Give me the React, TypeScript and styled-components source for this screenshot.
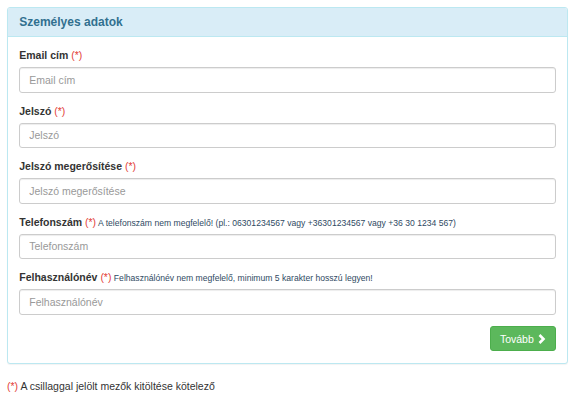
import React from "react";
import styled, { createGlobalStyle } from "styled-components";

const Global = createGlobalStyle`
  html, body { margin: 0; padding: 0; background: #fff; }
  body {
    font-family: "Liberation Sans", Arial, Helvetica, sans-serif;
    font-size: 10.5px;
    line-height: 1.42857;
    color: #333;
  }
  * { box-sizing: border-box; }
`;

const Page = styled.div`
  padding: 7px 10px 7px 7px;
`;

const Panel = styled.div`
  border: 1px solid #bce8f1;
  border-radius: 3px;
  background: #fff;
  margin-bottom: 15px;
  box-shadow: 0 1px 1px rgba(0, 0, 0, 0.05);
`;

const PanelHeading = styled.div`
  background: #d9edf7;
  border-bottom: 1px solid #bce8f1;
  border-radius: 2px 2px 0 0;
  padding: 7.5px 11.25px;
`;

const PanelTitle = styled.h3`
  margin: 0;
  font-size: 12px;
  line-height: 1.1;
  font-weight: bold;
  color: #31708f;
`;

const PanelBody = styled.div`
  padding: 11.25px;
  display: flex;
  flex-direction: column;
`;

const FormGroup = styled.div`
  margin-bottom: 11.25px;
`;

const Label = styled.label`
  display: block;
  font-weight: bold;
  margin-bottom: 3.75px;
  white-space: nowrap;
`;

const Req = styled.span`
  color: #e3413a;
  font-weight: normal;
`;

const Help = styled.span`
  font-weight: normal;
  font-size: 8.6px;
  color: #2f4a63;
`;

const Input = styled.input`
  display: block;
  width: 100%;
  height: 25.5px;
  padding: 4.5px 9px;
  font-family: inherit;
  font-size: 10.5px;
  color: #555;
  background: #fff;
  border: 1px solid #ccc;
  border-radius: 3px;
  box-shadow: inset 0 1px 1px rgba(0, 0, 0, 0.075);
  outline: none;
  &::placeholder { color: #999; }
`;

const Actions = styled.div`
  display: flex;
  justify-content: flex-end;
`;

const Button = styled.button`
  display: inline-flex;
  align-items: center;
  gap: 4px;
  height: 25.5px;
  padding: 4.5px 9px;
  font-family: inherit;
  font-size: 10.5px;
  color: #fff;
  background: #5cb85c;
  border: 1px solid #4cae4c;
  border-radius: 3px;
  cursor: pointer;
`;

const Footer = styled.p`
  margin: 0;
`;

type Field = { label: string; placeholder: string; help?: string; type?: string };

const fields: Field[] = [
  { label: "Email cím", placeholder: "Email cím", type: "email" },
  { label: "Jelszó", placeholder: "Jelszó", type: "password" },
  { label: "Jelszó megerősítése", placeholder: "Jelszó megerősítése", type: "password" },
  {
    label: "Telefonszám",
    placeholder: "Telefonszám",
    help: "A telefonszám nem megfelelő! (pl.: 06301234567 vagy +36301234567 vagy +36 30 1234 567)",
  },
  {
    label: "Felhasználónév",
    placeholder: "Felhasználónév",
    help: "Felhasználónév nem megfelelő, minimum 5 karakter hosszú legyen!",
  },
];

const Chevron = () => (
  <svg width="8" height="10" viewBox="0 0 8 10" aria-hidden="true">
    <path d="M1.5 1 L5.5 5 L1.5 9" fill="none" stroke="#fff" strokeWidth="2.6" strokeLinejoin="miter" />
  </svg>
);

export default function App() {
  return (
    <Page>
      <Global />
      <Panel>
        <PanelHeading>
          <PanelTitle>Személyes adatok</PanelTitle>
        </PanelHeading>
        <PanelBody>
          {fields.map((f) => (
            <FormGroup key={f.label}>
              <Label>
                {f.label} <Req>(*)</Req>
                {f.help && <Help> {f.help}</Help>}
              </Label>
              <Input type={f.type || "text"} placeholder={f.placeholder} />
            </FormGroup>
          ))}
          <Actions>
            <Button type="button">
              Tovább <Chevron />
            </Button>
          </Actions>
        </PanelBody>
      </Panel>
      <Footer>
        <Req>(*)</Req> A csillaggal jelölt mezők kitöltése kötelező
      </Footer>
    </Page>
  );
}
